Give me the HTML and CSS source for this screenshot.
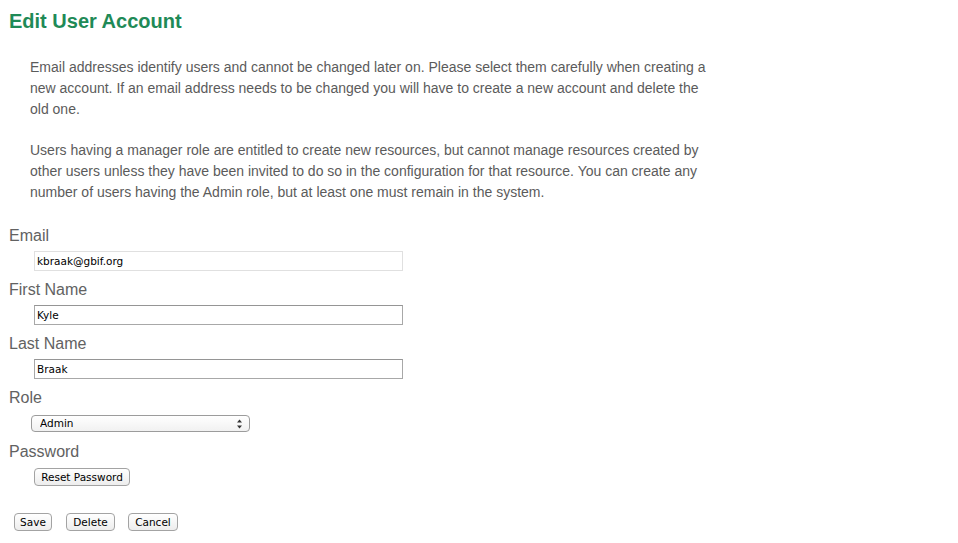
FILE: index.html
```html
<!DOCTYPE html>
<html>
<head>
<meta charset="utf-8">
<link rel="stylesheet" href="styles.css">
</head>
<body>
<div class="page">
  <h1 class="title">Edit User Account</h1>
  <div class="intro">
    <p>Email addresses identify users and cannot be changed later on. Please select them carefully when creating a new account. If an email address needs to be changed you will have to create a new account and delete the old one.</p>
    <p>Users having a manager role are entitled to create new resources, but cannot manage resources created by other users unless they have been invited to do so in the configuration for that resource. You can create any number of users having the Admin role, but at least one must remain in the system.</p>
  </div>
  <form class="form">
    <div class="field">
      <label class="label">Email</label>
      <input class="text readonly" type="text" value="kbraak@gbif.org" readonly>
    </div>
    <div class="field">
      <label class="label">First Name</label>
      <input class="text" type="text" value="Kyle">
    </div>
    <div class="field">
      <label class="label">Last Name</label>
      <input class="text" type="text" value="Braak">
    </div>
    <div class="field">
      <label class="label">Role</label>
      <div class="select-wrap">
        <select class="select"><option>Admin</option><option>Manager</option><option>User</option></select>
        <svg class="arrows" width="7" height="10" viewBox="0 0 7 10"><path d="M3.5 0.5 L6 3.5 H1 Z" fill="#333"/><path d="M3.5 9.5 L6 6.5 H1 Z" fill="#333"/></svg>
      </div>
    </div>
    <div class="field">
      <label class="label">Password</label>
      <button type="button" class="btn reset">Reset Password</button>
    </div>
    <div class="actions">
      <button type="button" class="btn save">Save</button>
      <button type="button" class="btn delete">Delete</button>
      <button type="button" class="btn cancel">Cancel</button>
    </div>
  </form>
</div>
</body>
</html>
```
FILE: styles.css
```css
html, body {
  margin: 0;
  padding: 0;
  background: #fff;
}
.page {
  padding: 9px 0 0 9px;
  font-family: "Liberation Sans", Arial, sans-serif;
  color: #5b5b5b;
}
.title {
  margin: 0;
  font-size: 20px;
  line-height: 24px;
  font-weight: bold;
  color: #1f8a57;
}
.intro {
  margin: 24px 0 0 21px;
  width: 690px;
}
.intro p {
  margin: 0 0 20px 0;
  font-size: 14px;
  line-height: 21px;
}
.intro p:last-child {
  margin-bottom: 0;
}
.form {
  margin-top: 23px;
}
.field {
  display: flex;
  flex-direction: column;
  align-items: flex-start;
  margin-bottom: 9px;
}
.label {
  font-size: 16px;
  line-height: 20px;
  color: #626262;
}
.text {
  box-sizing: border-box;
  margin: 5px 0 0 25px;
  width: 369px;
  height: 20px;
  padding: 0 2px;
  border: 1px solid #a8a8a8;
  border-top-color: #959595;
  font-family: "DejaVu Sans", sans-serif;
  font-size: 10.5px;
  color: #000;
  outline: none;
}
.text.readonly {
  border-color: #e0e0e0;
}
.select-wrap {
  position: relative;
  display: flex;
  margin: 7px 0 1px 22px;
}
.select {
  -webkit-appearance: none;
  appearance: none;
  box-sizing: border-box;
  width: 219px;
  height: 17px;
  margin: 0;
  padding: 0 0 0 8px;
  border: 1px solid #9c9c9c;
  border-radius: 4px;
  background: linear-gradient(#ffffff, #f1f1f1);
  font-family: "DejaVu Sans", sans-serif;
  font-size: 10.5px;
  color: #000;
  line-height: 15px;
  outline: none;
}
.arrows {
  position: absolute;
  right: 7px;
  top: 4px;
}
.btn {
  box-sizing: border-box;
  height: 18px;
  margin: 0;
  padding: 0;
  border: 1px solid #a3a3a3;
  border-radius: 4px;
  background: linear-gradient(#ffffff, #ededed);
  font-family: "DejaVu Sans", sans-serif;
  font-size: 10.5px;
  line-height: 16px;
  color: #000;
  white-space: nowrap;
}
.reset {
  margin: 6px 0 0 25px;
  width: 96px;
}
.actions {
  display: flex;
  gap: 14px;
  margin: 27px 0 0 5px;
}
.save { width: 38px; }
.delete { width: 49px; }
.cancel { width: 50px; margin-left: -1px; }
```
